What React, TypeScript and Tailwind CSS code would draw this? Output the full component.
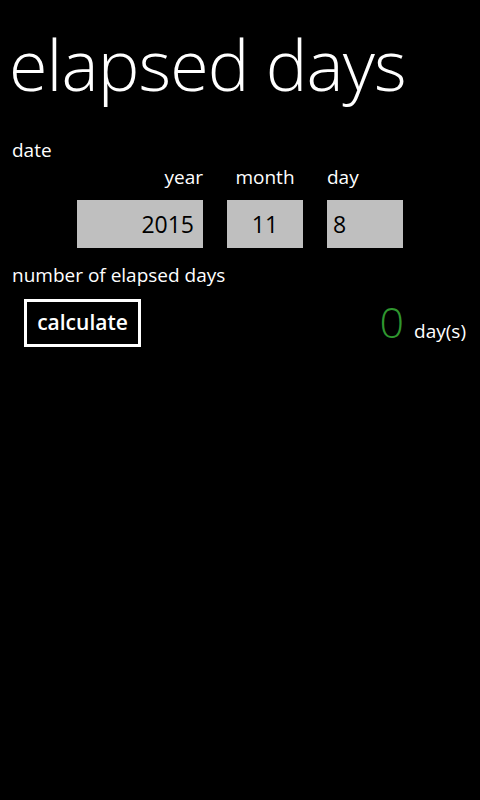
import React, { useState } from 'react';

const font = { fontFamily: '"Open Sans", "Noto Sans", sans-serif' };

const App: React.FC = () => {
  const [year, setYear] = useState('2015');
  const [month, setMonth] = useState('11');
  const [day, setDay] = useState('8');
  const [result, setResult] = useState(0);

  const calculate = () => {
    const from = new Date(Number(year), Number(month) - 1, Number(day));
    const diff = Math.floor((Date.now() - from.getTime()) / 86400000);
    setResult(isNaN(diff) ? 0 : diff);
  };

  return (
    <div className="w-[480px] h-[800px] bg-black text-white overflow-hidden" style={font}>
      <h1 className="pl-[9px] pt-[24px] text-[70px] font-light leading-[80px] tracking-[-0.9px]">elapsed days</h1>

      <div className="mt-[34px] pl-[12px] text-[19px] leading-[24px]">date</div>

      <div className="ml-[77px] mt-[3px] flex gap-[24px] text-[19px] leading-[24px]">
        <div className="w-[126px] text-right">year</div>
        <div className="w-[76px] text-center">month</div>
        <div className="w-[76px] text-left">day</div>
      </div>

      <div className="ml-[77px] mt-[11px] flex gap-[24px]">
        <input
          value={year}
          onChange={(e) => setYear(e.target.value)}
          className="w-[126px] h-[48px] bg-[#bfbfbf] text-black text-[23px] text-right pr-[9px] outline-none"
        />
        <input
          value={month}
          onChange={(e) => setMonth(e.target.value)}
          className="w-[76px] h-[48px] bg-[#bfbfbf] text-black text-[23px] text-center outline-none"
        />
        <input
          value={day}
          onChange={(e) => setDay(e.target.value)}
          className="w-[76px] h-[48px] bg-[#bfbfbf] text-black text-[23px] text-left pl-[6px] outline-none"
        />
      </div>

      <div className="mt-[15px] pl-[12px] text-[19px] leading-[24px]">number of elapsed days</div>

      <div className="mt-[12px] flex items-center justify-between pl-[24px] pr-[14px]">
        <button
          onClick={calculate}
          className="w-[117px] h-[48px] border-[3px] border-white text-[21px] font-semibold"
        >
          calculate
        </button>
        <div className="flex items-baseline gap-[10px]">
          <span className="text-[43px] font-light text-[#2f962f] leading-none">{result}</span>
          <span className="text-[19px]">day(s)</span>
        </div>
      </div>
    </div>
  );
};

export default App;
